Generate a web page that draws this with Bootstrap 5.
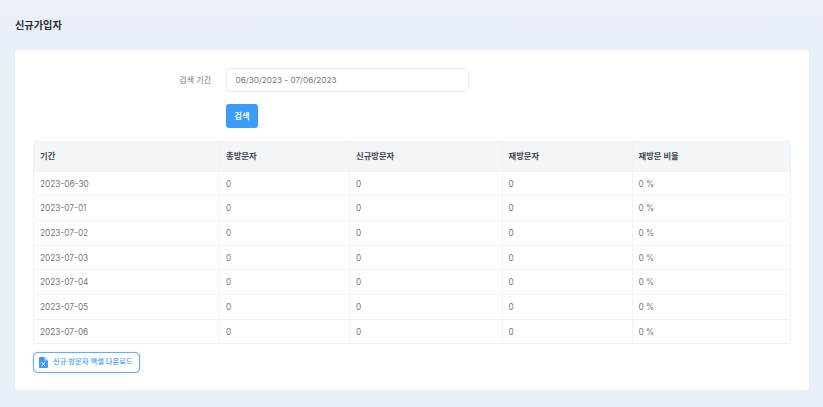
<!DOCTYPE html>
<html lang="ko">
<head>
    <meta charset="UTF-8">
    <meta name="viewport" content="width=device-width, initial-scale=1.0">
    <title>신규가입자</title>
    <link href="https://cdn.jsdelivr.net/npm/bootstrap@5.3.3/dist/css/bootstrap.min.css" rel="stylesheet">
    <style>
        body { background: linear-gradient(#edf2f9, #e9eff7 50px); font-family: Inter, "Noto Sans CJK KR", sans-serif; font-size: 8.3px; color: #757a81; overflow: hidden; }
        .page-wrap { padding: 0 14px 0 15px; height: 407px; }
        .page-head { height: 50px; padding-top: 1px; color: #2b2e33; font-size: 10.2px; font-weight: 600; }
        .main-card { height: 340px; padding: 18px 18px 0; border: 0; border-radius: 3px; background: #fff; }
        .search-label { width: 178px; margin-right: 15px; color: #757a81; font-size: 8px; }
        .range-input { width: 243px; height: 24px; padding: 0 8.5px; font-size: 8.2px; color: #757a81; border: 1px solid #e8ecf3; border-radius: 4px; }
        .search-btn { width: 32px; height: 24px; padding: 0; margin: 12px 0 13px 193px; font-size: 8.3px; font-weight: 600; border: 0; border-radius: 3px; background: #3a9cfb; }
        .stat-table { table-layout: fixed; width: 757px; margin: 0; font-size: 8.3px; --bs-table-color: #757a81; border-color: #f0f2f6; }
        .stat-table th { height: 29.5px; padding: 0 6px; vertical-align: middle; background: #f3f6f9; color: #44494f; font-weight: 600; }
        .stat-table td { height: 24.7px; padding: 1px 6px 0; vertical-align: middle; }
        .excel-btn { width: 107px; height: 21px; margin-top: 8px; padding: 0 0 0 5px; gap: 5px; font-size: 7.3px; font-weight: 500; color: #3a9cfb; border: 1px solid #5fadfc; border-radius: 5px; background: #fff; box-shadow: 0 0 1px #6db5fc; }
    </style>
</head>
<body>
    <div class="page-wrap">
        <div class="page-head d-flex align-items-center">신규가입자</div>

        <div class="card main-card">
            <form>
                <div class="d-flex align-items-center">
                    <label class="search-label text-end" for="range">검색 기간</label>
                    <input id="range" type="text" class="form-control range-input" value="06/30/2023 - 07/06/2023">
                </div>
                <button type="button" class="btn btn-primary search-btn d-block">검색</button>
            </form>

            <table class="table table-bordered stat-table">
                <colgroup>
                    <col style="width: 186px">
                    <col style="width: 130px">
                    <col style="width: 152.5px">
                    <col style="width: 130px">
                    <col style="width: 158.5px">
                </colgroup>
                <thead>
                    <tr><th>기간</th><th>총방문자</th><th>신규방문자</th><th>재방문자</th><th>재방문 비율</th></tr>
                </thead>
                <tbody>
                    <tr><td>2023-06-30</td><td>0</td><td>0</td><td>0</td><td>0 %</td></tr>
                    <tr><td>2023-07-01</td><td>0</td><td>0</td><td>0</td><td>0 %</td></tr>
                    <tr><td>2023-07-02</td><td>0</td><td>0</td><td>0</td><td>0 %</td></tr>
                    <tr><td>2023-07-03</td><td>0</td><td>0</td><td>0</td><td>0 %</td></tr>
                    <tr><td>2023-07-04</td><td>0</td><td>0</td><td>0</td><td>0 %</td></tr>
                    <tr><td>2023-07-05</td><td>0</td><td>0</td><td>0</td><td>0 %</td></tr>
                    <tr><td>2023-07-06</td><td>0</td><td>0</td><td>0</td><td>0 %</td></tr>
                </tbody>
            </table>

            <button type="button" class="btn excel-btn d-flex align-items-center">
                <svg width="9" height="11" viewBox="0 0 9 11" aria-hidden="true">
                    <path d="M0 1a1 1 0 0 1 1-1h4.5L9 3.5V10a1 1 0 0 1-1 1H1a1 1 0 0 1-1-1z" fill="#3a9cfb"/>
                    <path d="M5.5 0v3.5H9z" fill="#a9d4fd"/>
                    <path d="M2.8 5.2l3.2 4M6 5.2l-3.2 4" stroke="#fff" stroke-width="1" fill="none"/>
                </svg>
                <span>신규 방문자 엑셀 다운로드</span>
            </button>
        </div>
    </div>
</body>
</html>
